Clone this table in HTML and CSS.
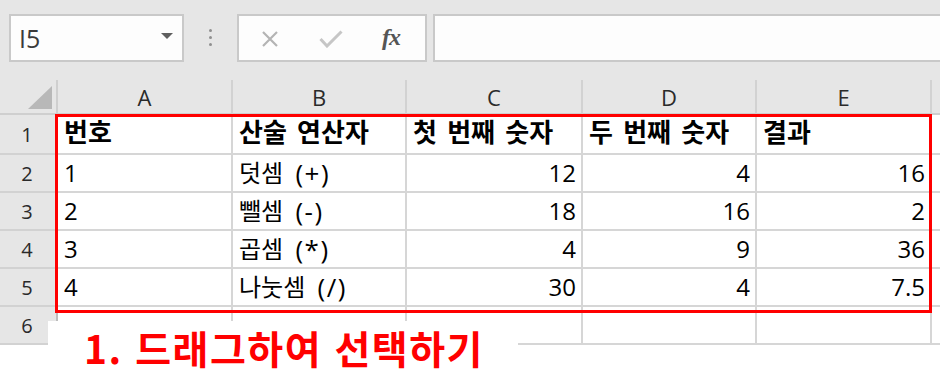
FILE: index.html
```html
<!DOCTYPE html>
<html lang="ko">
<head>
<meta charset="utf-8">
<title>Excel</title>
<link rel="stylesheet" href="styles.css">
</head>
<body>
<div class="toolbar">
  <div class="namebox"><span class="ref">I5</span><span class="caret"></span></div>
  <div class="dots"><i></i><i></i><i></i></div>
  <div class="fbtns">
    <svg class="ic-x" width="20" height="16" viewBox="0 0 20 16"><path d="M3 1 L17 15 M17 1 L3 15" stroke="#b4b4b4" stroke-width="2.2" fill="none"/></svg>
    <svg class="ic-ok" width="24" height="18" viewBox="0 0 24 18"><path d="M1.5 9 L8 16 L22.5 1.5" stroke="#c6c6c6" stroke-width="3" fill="none"/></svg>
    <span class="fx">fx</span>
  </div>
  <div class="fbar"></div>
</div>
<div class="sheet">
  <div class="corner"><span class="tri"></span></div>
  <div class="colh">A</div><div class="colh">B</div><div class="colh">C</div><div class="colh">D</div><div class="colh">E</div><div class="colh last"></div>

  <div class="rowh">1</div>
  <div class="cell b">번호</div><div class="cell b">산술 연산자</div><div class="cell b">첫 번째 숫자</div><div class="cell b">두 번째 숫자</div><div class="cell b">결과</div><div class="cell last"></div>

  <div class="rowh">2</div>
  <div class="cell">1</div><div class="cell k">덧셈 <span class="op">(+)</span></div><div class="cell n">12</div><div class="cell n">4</div><div class="cell n">16</div><div class="cell last"></div>

  <div class="rowh">3</div>
  <div class="cell">2</div><div class="cell k">뺄셈 <span class="op">(-)</span></div><div class="cell n">18</div><div class="cell n">16</div><div class="cell n">2</div><div class="cell last"></div>

  <div class="rowh">4</div>
  <div class="cell">3</div><div class="cell k">곱셈 <span class="op">(*)</span></div><div class="cell n">4</div><div class="cell n">9</div><div class="cell n">36</div><div class="cell last"></div>

  <div class="rowh">5</div>
  <div class="cell">4</div><div class="cell k">나눗셈 <span class="op">(/)</span></div><div class="cell n">30</div><div class="cell n">4</div><div class="cell n">7.5</div><div class="cell last"></div>

  <div class="rowh">6</div>
  <div class="cell"></div><div class="cell"></div><div class="cell"></div><div class="cell"></div><div class="cell"></div><div class="cell last"></div>

  <div class="selection"></div>
  <div class="note">1. 드래그하여 선택하기</div>
</div>
</body>
</html>
```

FILE: styles.css
```css
* { box-sizing: border-box; }
html, body { margin: 0; padding: 0; background: #ffffff; }
body {
  width: 940px;
  height: 392px;
  overflow: hidden;
  font-family: "Open Sans", "Noto Sans CJK KR", sans-serif;
  color: #000;
}

.toolbar {
  height: 80px;
  background: #e6e6e6;
  display: flex;
  align-items: flex-start;
  padding-top: 14px;
}
.namebox {
  margin-left: 9px;
  width: 175px;
  height: 48px;
  border: 2px solid #c9c9c9;
  background: #fdfdfd;
  display: flex;
  align-items: center;
  justify-content: space-between;
  padding: 0 9px 0 8px;
}
.ref {
  font-family: "Open Sans", sans-serif;
  font-size: 25px;
  color: #3a3a3a;
  line-height: 1;
  margin-top: 1px;
}
.caret {
  width: 0; height: 0;
  border-left: 6px solid transparent;
  border-right: 6px solid transparent;
  border-top: 6px solid #5f5f5f;
  margin-top: -4px;
}
.dots {
  width: 53px;
  height: 48px;
  display: flex;
  flex-direction: column;
  align-items: center;
  justify-content: center;
  gap: 4px;
  padding-right: 1px;
  padding-bottom: 2px;
}
.dots i {
  width: 3px; height: 3px;
  background: #8f8f8f;
  border-radius: 50%;
}
.fbtns {
  width: 190px;
  height: 48px;
  border: 2px solid #c9c9c9;
  background: #fdfdfd;
  display: flex;
  align-items: center;
  padding-left: 21px;
}
.ic-x { margin-top: 2px; }
.ic-ok { margin-left: 39px; margin-top: 1px; }
.fx {
  margin-left: 39px;
  font-family: "Liberation Serif", serif;
  font-style: italic;
  font-weight: bold;
  font-size: 24px;
  color: #555;
  letter-spacing: -1px;
  margin-top: -2px;
}
.fbar {
  flex: 1;
  margin-left: 6px;
  height: 48px;
  border: 2px solid #c9c9c9;
  border-right: none;
  background: #fdfdfd;
}

.sheet {
  position: relative;
  display: grid;
  grid-template-columns: 58px 175px 174px 176px 174px 175px 8px;
  grid-template-rows: 35px 40px 38px 38px 38px 38px 38px;
  background: #e6e6e6;
}
.corner {
  background: #e6e6e6;
  border-right: 2px solid #cfcfcf;
  border-bottom: 2px solid #cfcfcf;
  position: relative;
}
.tri {
  position: absolute;
  right: 4px;
  bottom: 4px;
  width: 0; height: 0;
  border-left: 24px solid transparent;
  border-bottom: 23px solid #b8b8b8;
}
.colh {
  background: #e6e6e6;
  border-right: 2px solid #d2d2d2;
  border-bottom: 2px solid #cfcfcf;
  display: flex;
  align-items: center;
  justify-content: center;
  font-size: 22px;
  color: #2a2a2a;
  padding-top: 1px;
}
.colh.last { border-right: none; }
.rowh {
  background: #e6e6e6;
  border-right: 2px solid #bdbdbd;
  border-bottom: 2px solid #d2d2d2;
  display: flex;
  align-items: center;
  justify-content: center;
  font-size: 20px;
  color: #2a2a2a;
  padding-right: 2px;
}
.cell {
  background: #fff;
  border-right: 2px solid #d6d6d6;
  border-bottom: 2px solid #d6d6d6;
  display: flex;
  align-items: center;
  padding: 0 5px 0 6px;
  font-size: 24px;
  white-space: pre;
  line-height: 1;
}
.cell.b {
  font-family: "Noto Sans CJK KR", sans-serif;
  font-weight: 700;
  font-size: 26px;
  word-spacing: 3px;
  padding-bottom: 6px;
}
.cell.k { word-spacing: 6px; }
.op {
  font-size: 26px;
  letter-spacing: 1.5px;
  word-spacing: 0;
}
.cell.n { justify-content: flex-end; }
.cell.last { border-right: none; }

.selection {
  position: absolute;
  left: 55px;
  top: 34px;
  width: 877px;
  height: 199px;
  border: 3px solid #ff0000;
}
.note {
  position: absolute;
  left: 48px;
  top: 241px;
  width: 470px;
  height: 52px;
  background: #fff;
  padding-left: 36px;
  font-family: "Noto Sans CJK KR", sans-serif;
  font-weight: 700;
  font-size: 39px;
  letter-spacing: 1.5px;
  line-height: 52px;
  color: #ff0000;
  white-space: nowrap;
}
```
